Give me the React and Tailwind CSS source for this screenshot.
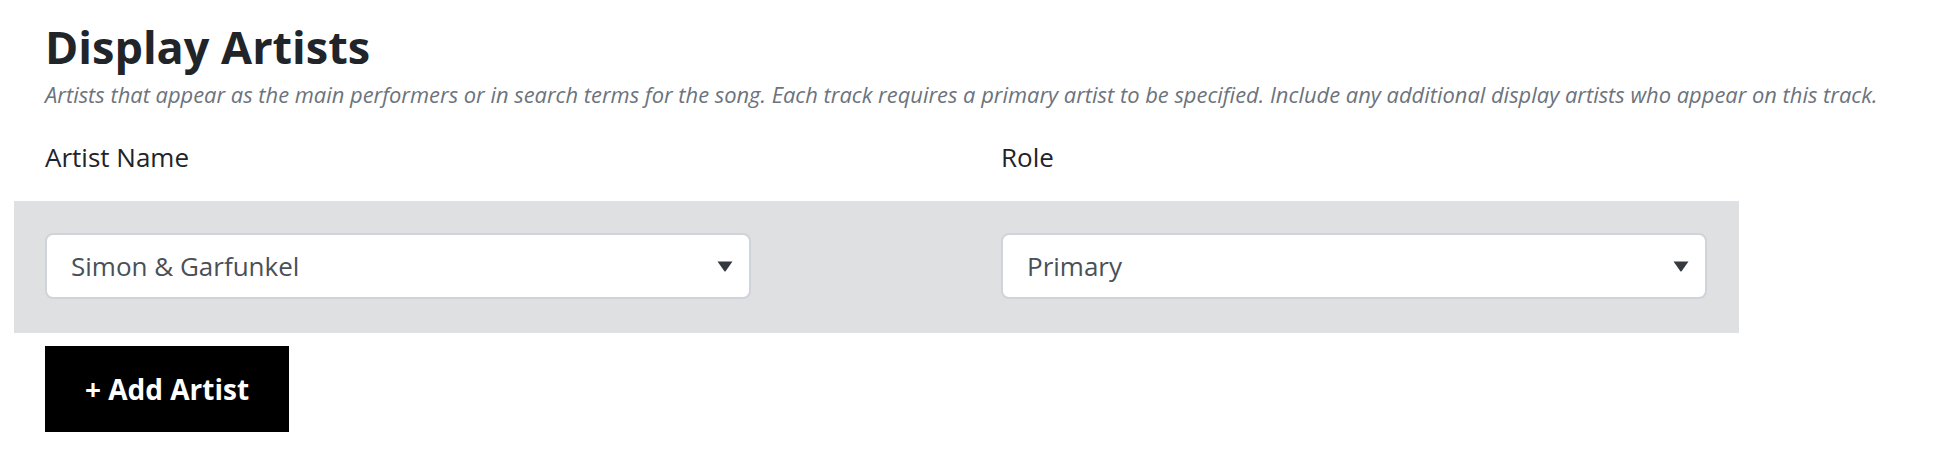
export default function App() {
  const rows = [{ artist: "Simon & Garfunkel", role: "Primary" }];

  return (
    <div className="min-h-screen bg-white font-['Open_Sans',sans-serif]">
      <div className="pl-[14px] pt-[17px]">
        <div className="pl-[31px]">
          <h2 className="text-[45px] font-bold leading-[60px] text-[#212429]">
            Display Artists
          </h2>
          <p className="mt-[4px] text-[21.9px] italic leading-[28px] text-[#6c737c]">
            Artists that appear as the main performers or in search terms for the song. Each track requires a primary artist to be specified. Include any additional display artists who appear on this track.
          </p>
        </div>

        <div className="mt-[30px] flex pl-[31px] text-[26px] leading-[36px] text-[#212429]">
          <div className="w-[956px]">Artist Name</div>
          <div>Role</div>
        </div>

        {rows.map((row) => (
          <div
            key={row.artist}
            className="mt-[26px] flex h-[132px] w-[1725px] items-center gap-[250px] bg-[#dfe0e2] px-[31px] pb-[2px]"
          >
            <SelectBox value={row.artist} />
            <SelectBox value={row.role} />
          </div>
        ))}

        <div className="pl-[31px] pt-[13px]">
          <button className="h-[86px] w-[244px] bg-black text-[28px] font-bold text-white">
            + Add Artist
          </button>
        </div>
      </div>
    </div>
  );
}

function SelectBox({ value }) {
  return (
    <div className="flex h-[66px] w-[706px] items-center justify-between rounded-[8px] border-2 border-[#ced4da] bg-white pl-[24px] pr-[16px]">
      <span className="text-[26px] text-[#495057]">{value}</span>
      <svg width="16" height="11" viewBox="0 0 16 11">
        <path d="M0.5 0.5h15L8.6 10.2q-0.6 0.7-1.2 0z" fill="#343a40" />
      </svg>
    </div>
  );
}
